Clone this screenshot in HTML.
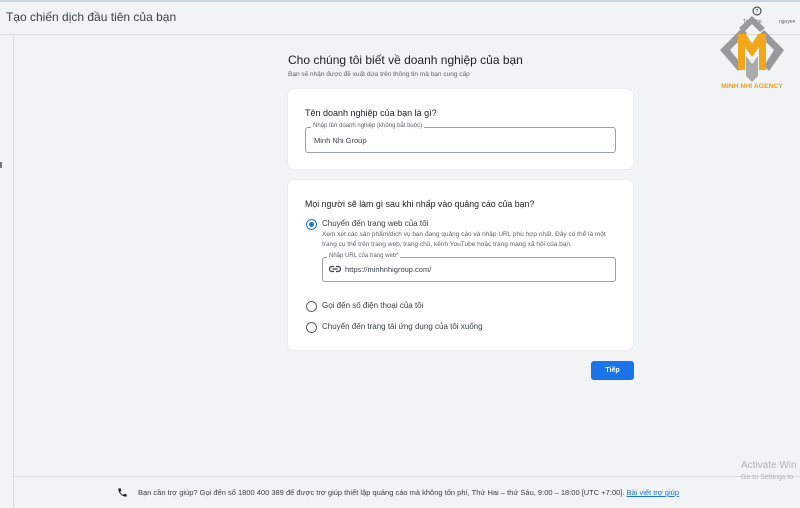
<!DOCTYPE html>
<html><head><meta charset="utf-8"><style>
*{margin:0;padding:0;box-sizing:border-box}
body{width:800px;height:508px;background:#f1f3f4;font-family:"Liberation Sans",sans-serif;color:#202124;position:relative;overflow:hidden}
.a{position:absolute;white-space:nowrap}
.hdr{left:0;top:0;width:800px;height:35px;border-top:2px solid #c8d4e6;border-bottom:1px solid #dadce0;background:#f1f3f4}
.card{background:#fff;border-radius:6px;box-shadow:0 0 1px rgba(0,0,0,.15)}
.fld{border:1px solid #9aa0a6;border-radius:3px}
.lbl{font-size:6px;color:#5f6368;background:#fff;padding:0 2px}
.radio{width:11px;height:11px;border:1.5px solid #5f6368;border-radius:50%}
</style></head><body>
<div class="a hdr"></div>
<div class="a" style="left:6px;top:10px;font-size:12px;color:#3c4043">Tạo chiến dịch đầu tiên của bạn</div>
<div class="a" style="left:13px;top:36px;width:1px;height:472px;background:#dadce0"></div>
<div class="a" style="left:0;top:162px;width:2px;height:6px;background:#777"></div>
<div class="a" style="left:743px;top:19px;font-size:5px;color:#5f6368">Trợ giúp</div>
<div class="a" style="left:779px;top:19px;font-size:5px;color:#5f6368">nguyen</div>
<svg class="a" style="left:712px;top:4px" width="80" height="88" viewBox="0 0 80 88">
<circle cx="45" cy="7" r="4" fill="none" stroke="#333" stroke-width="1"/>
<text x="43.5" y="9" font-size="5" fill="#333" font-family="Liberation Sans">?</text>
<polygon points="8,46 30,24 35,29 18,46 31,62 26,67" fill="#999"/>
<polygon points="72,46 52,26 47,31 62,46 52,62 57,67" fill="#999"/>
<polygon points="40,12 53,24 48,28 40,20 32,28 27,24" fill="#999"/>
<polygon points="26,30 34,30 40,40 46,30 54,30 54,66 47,66 47,43 40,53 33,43 33,66 26,66" fill="#f2a71b"/>
<polygon points="34,52 40,60 46,52 46,72 40,78 34,72" fill="#999" opacity=".8"/>
<text x="40" y="84" font-size="6.8" fill="#e6a21a" font-weight="bold" text-anchor="middle" font-family="Liberation Sans">MINH NHI AGENCY</text>
</svg>
<div class="a" style="left:288px;top:53px;font-size:12px;color:#202124">Cho chúng tôi biết về doanh nghiệp của bạn</div>
<div class="a" style="left:288px;top:71px;font-size:6.5px;color:#5f6368">Bạn sẽ nhận được đề xuất dựa trên thông tin mà bạn cung cấp</div>
<div class="a card" style="left:288px;top:89px;width:345px;height:80px"></div>
<div class="a" style="left:305px;top:108px;font-size:9px">Tên doanh nghiệp của bạn là gì?</div>
<div class="a fld" style="left:305px;top:127px;width:311px;height:26px"></div>
<div class="a lbl" style="left:311px;top:123px">Nhập tên doanh nghiệp (không bắt buộc)</div>
<div class="a" style="left:314px;top:136px;font-size:7.5px;color:#3c4043">Minh Nhi Group</div>
<div class="a card" style="left:288px;top:180px;width:345px;height:170px"></div>
<div class="a" style="left:305px;top:199px;font-size:8.8px">Mọi người sẽ làm gì sau khi nhấp vào quảng cáo của bạn?</div>
<div class="a radio" style="left:306px;top:219px;border-color:#1a73e8"></div>
<div class="a" style="left:309px;top:222px;width:5px;height:5px;border-radius:50%;background:#1a73e8"></div>
<div class="a" style="left:322px;top:219px;font-size:8px;color:#3c4043">Chuyển đến trang web của tôi</div>
<div class="a" style="left:322px;top:230px;font-size:6.5px;color:#5f6368;line-height:10px">Xem xét các sản phẩm/dịch vụ bạn đang quảng cáo và nhập URL phù hợp nhất. Đây có thể là một<br>trang cụ thể trên trang web, trang chủ, kênh YouTube hoặc trang mạng xã hội của bạn.</div>
<div class="a fld" style="left:322px;top:257px;width:294px;height:25px"></div>
<div class="a lbl" style="left:327px;top:253px">Nhập URL của trang web*</div>
<svg class="a" style="left:329px;top:265px" width="12" height="8" viewBox="0 0 12 8"><path d="M5 1.5H3a2.5 2.5 0 0 0 0 5h2M7 1.5h2a2.5 2.5 0 0 1 0 5H7M3.5 4h5" fill="none" stroke="#3c4043" stroke-width="1.2"/></svg>
<div class="a" style="left:345px;top:265px;font-size:7.5px;color:#3c4043">https://minhnhigroup.com/</div>
<div class="a radio" style="left:306px;top:301px"></div>
<div class="a" style="left:322px;top:301px;font-size:8px;color:#3c4043">Gọi đến số điện thoại của tôi</div>
<div class="a radio" style="left:306px;top:322px"></div>
<div class="a" style="left:322px;top:322px;font-size:8px;color:#3c4043">Chuyển đến trang tải ứng dụng của tôi xuống</div>
<div class="a" style="left:591px;top:361px;width:43px;height:19px;background:#1a73e8;border-radius:3px;color:#fff;font-size:7px;font-weight:bold;text-align:center;line-height:19px">Tiếp</div>
<div class="a" style="left:14px;top:476px;width:786px;height:1px;background:#dadce0"></div>
<svg class="a" style="left:117px;top:487px" width="11" height="11" viewBox="0 0 24 24"><path d="M6.6 10.8c1.4 2.8 3.8 5.1 6.6 6.6l2.2-2.2c.3-.3.7-.4 1-.2 1.1.4 2.3.6 3.6.6.6 0 1 .4 1 1V20c0 .6-.4 1-1 1C10.6 21 3 13.4 3 4c0-.6.4-1 1-1h3.5c.6 0 1 .4 1 1 0 1.3.2 2.5.6 3.6.1.3 0 .7-.2 1z" fill="#202124"/></svg>
<div class="a" style="left:138px;top:488px;font-size:7.5px;color:#3c4043">Bạn cần trợ giúp? Gọi đến số 1800 400 389 để được trợ giúp thiết lập quảng cáo mà không tốn phí, Thứ Hai – thứ Sáu, 9:00 – 18:00 [UTC +7:00]. <span style="color:#1a73e8;text-decoration:underline">Bài viết trợ giúp</span></div>
<div class="a" style="left:741px;top:460px;font-size:10px;color:#b0b3b6">Activate Win</div>
<div class="a" style="left:741px;top:474px;font-size:7px;color:#b0b3b6">Go to Settings to</div>
</body></html>
